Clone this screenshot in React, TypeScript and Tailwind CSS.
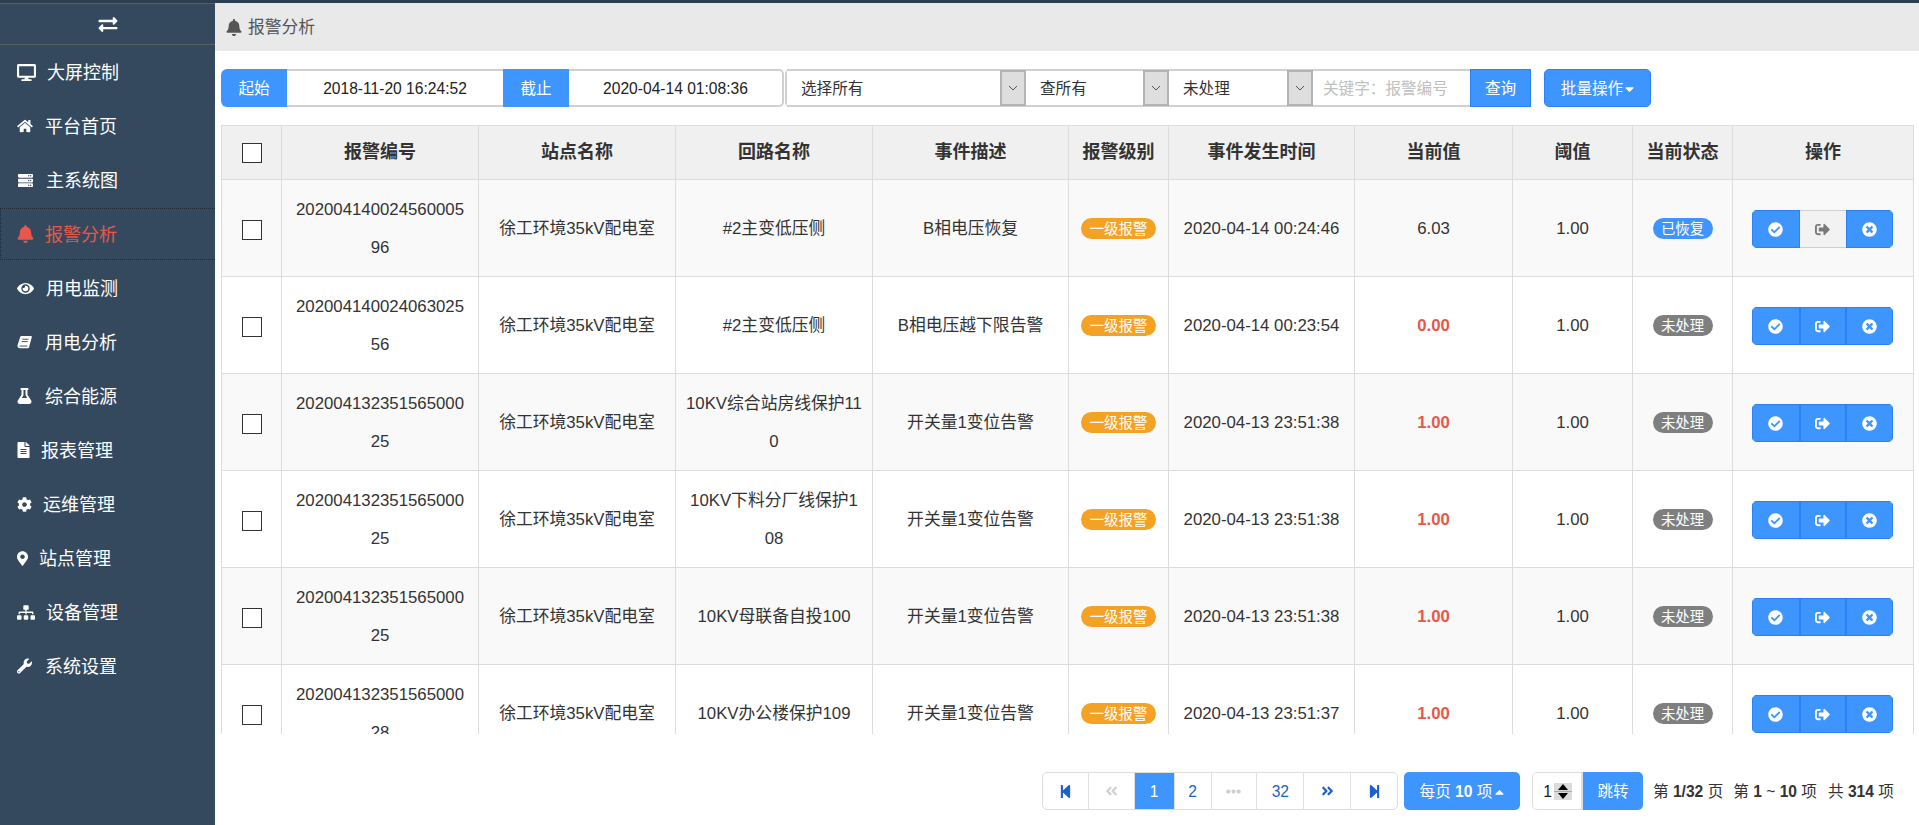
import React from "react";
import {
  FaDesktop, FaHome, FaServer, FaBell, FaEye, FaFlask, FaFileAlt, FaCog, FaMapMarkerAlt, FaSitemap, FaWrench,
  FaExchangeAlt, FaCheckCircle, FaTimesCircle, FaSignOutAlt, FaStepBackward, FaStepForward, FaAngleDoubleLeft,
  FaAngleDoubleRight, FaEllipsisH, FaCaretDown, FaCaretUp,
} from "react-icons/fa";

const FONT = "font-['Liberation_Sans','Noto_Sans_CJK_SC',sans-serif]";

function BookIcon({ className }: { className?: string }) {
  return (
    <svg viewBox="0 0 16 16" className={className}>
      <path fill="currentColor" d="M4.5 1H15a.8.8 0 0 1 .8 1L12.9 13a1.5 1.5 0 0 1-1.4 1.1H3A2.5 2.5 0 0 1 .6 11L3.4 2A1.5 1.5 0 0 1 4.5 1Z" />
      <path fill="none" stroke="#34495e" strokeWidth="1" d="M5.6 4.5H12.2M4.9 7H11.5M2.7 11.8H11" />
    </svg>
  );
}

const menu = [
  { icon: FaDesktop, label: "大屏控制", box: "w-[19px] h-[17px]", slot: "w-[30px]" },
  { icon: FaHome, label: "平台首页", box: "w-[16px] h-[14px]", slot: "w-[28px]" },
  { icon: FaServer, label: "主系统图", box: "w-[17px] h-[15px]", slot: "w-[29px]" },
  { icon: FaBell, label: "报警分析", box: "w-[17px] h-[18px]", slot: "w-[28px]", active: true },
  { icon: FaEye, label: "用电监测", box: "w-[17px] h-[15px]", slot: "w-[29px]" },
  { icon: BookIcon, label: "用电分析", box: "w-[15px] h-[15px]", slot: "w-[28px]" },
  { icon: FaFlask, label: "综合能源", box: "w-[15px] h-[16px]", slot: "w-[28px]" },
  { icon: FaFileAlt, label: "报表管理", box: "w-[13px] h-[16px]", slot: "w-[24px]" },
  { icon: FaCog, label: "运维管理", box: "w-[15px] h-[15px]", slot: "w-[26px]" },
  { icon: FaMapMarkerAlt, label: "站点管理", box: "w-[11px] h-[15px]", slot: "w-[22px]" },
  { icon: FaSitemap, label: "设备管理", box: "w-[18px] h-[15px]", slot: "w-[29px]" },
  { icon: FaWrench, label: "系统设置", box: "w-[15px] h-[16px]", slot: "w-[28px]" },
];

const heads = ["报警编号", "站点名称", "回路名称", "事件描述", "报警级别", "事件发生时间", "当前值", "阈值", "当前状态", "操作"];

const rows = [
  { id: ["202004140024560005", "96"], loop: ["#2主变低压侧"], desc: "B相电压恢复", time: "2020-04-14 00:24:46", val: "6.03", red: false, done: true },
  { id: ["202004140024063025", "56"], loop: ["#2主变低压侧"], desc: "B相电压越下限告警", time: "2020-04-14 00:23:54", val: "0.00", red: true, done: false },
  { id: ["202004132351565000", "25"], loop: ["10KV综合站房线保护11", "0"], desc: "开关量1变位告警", time: "2020-04-13 23:51:38", val: "1.00", red: true, done: false },
  { id: ["202004132351565000", "25"], loop: ["10KV下料分厂线保护1", "08"], desc: "开关量1变位告警", time: "2020-04-13 23:51:38", val: "1.00", red: true, done: false },
  { id: ["202004132351565000", "25"], loop: ["10KV母联备自投100"], desc: "开关量1变位告警", time: "2020-04-13 23:51:38", val: "1.00", red: true, done: false },
  { id: ["202004132351565000", "28"], loop: ["10KV办公楼保护109"], desc: "开关量1变位告警", time: "2020-04-13 23:51:37", val: "1.00", red: true, done: false },
];

function Select({ label, w }: { label: string; w: string }) {
  return (
    <div className={`${w} flex items-stretch bg-white border-y-2 border-[#d0d0d0]`}>
      <div className="flex-1 pl-[14px] pt-[2px] flex items-center text-[#333]">{label}</div>
      <div className="w-[26px] -my-[1px] bg-[#dedede] border-2 border-[#b4b4b4] flex items-center justify-center">
        <svg viewBox="0 0 10 6" className="w-[10px] h-[6px]">
          <path d="M1 1l4 4 4-4" fill="none" stroke="#555" strokeWidth="1" />
        </svg>
      </div>
    </div>
  );
}

function Action({ icon: Icon, w, gray }: { icon: React.ComponentType<{ className?: string }>; w: string; gray?: boolean }) {
  return (
    <div className={`${w} flex items-center justify-center ${gray ? "bg-[#f2f2f2] border-y border-[#cfcfcf]" : "bg-[#3e95fe] border border-[#2a80f5]"}`}>
      <Icon className={`w-[15px] h-[15px] ${gray ? "text-[#7a7a7a]" : "text-white"}`} />
    </div>
  );
}

function PageCell({ w, children, cls = "" }: { w: string; children: React.ReactNode; cls?: string }) {
  return <div className={`${w} flex items-center justify-center border-r border-[#e0e0e0] last:border-r-0 ${cls}`}>{children}</div>;
}

export default function App() {
  return (
    <div className={`${FONT} h-[825px] w-[1919px] flex flex-col overflow-hidden bg-white text-[#333] text-[16.8px]`}>
      <div className="h-[3px] bg-[#2c3e50] shrink-0" />
      <div className="flex flex-1 min-h-0">
        <aside className="w-[215px] shrink-0 bg-[#34495e] text-white">
          <div className="h-[42px] border-y border-[#5b5f62] flex items-center justify-center">
            <FaExchangeAlt className="w-[22px] h-[19px] text-white" />
          </div>
          {menu.map((m) => {
            const Icon = m.icon;
            return (
              <div
                key={m.label}
                className={`flex items-center text-[18px] ${m.active ? "h-[52px] my-[1px] pl-[16px] text-[#e9574a] border-y border-l border-dotted border-[#1f2c38]" : "h-[54px] pl-[17px] text-white"}`}
              >
                <div className={`${m.slot} shrink-0 flex items-center`}>
                  <Icon className={m.box} />
                </div>
                <span className="pt-[2px]">{m.label}</span>
              </div>
            );
          })}
        </aside>

        <main className="flex-1 min-w-0 flex flex-col">
          <div className="h-[48px] shrink-0 bg-[#e9e9e9] pl-[11px] flex items-center text-[#555]">
            <FaBell className="w-[16px] h-[17px] mr-[6px]" />
            <span className="pt-[2px]">报警分析</span>
          </div>

          <div className="mt-[18px] ml-[6px] h-[38px] flex items-stretch text-[15.6px] shrink-0">
            <div className="w-[66px] pt-[2px] bg-[#3e95fe] text-white rounded-l-[6px] flex items-center justify-center">起始</div>
            <div className="w-[216px] pt-[2px] bg-white border-y-2 border-[#d0d0d0] flex items-center justify-center text-[#222]">2018-11-20 16:24:52</div>
            <div className="w-[66px] pt-[2px] bg-[#3e95fe] text-white flex items-center justify-center">截止</div>
            <div className="w-[215px] pt-[1px] bg-white border-y-2 border-r-2 border-[#d0d0d0] rounded-r-[5px] flex items-center justify-center text-[#222]">2020-04-14 01:08:36</div>
            <div className="w-[241px] ml-[1px] rounded-l-[5px] border-l-2 border-[#d0d0d0] flex items-stretch">
              <Select label="选择所有" w="w-full" />
            </div>
            <Select label="查所有" w="w-[143px]" />
            <Select label="未处理" w="w-[144px]" />
            <div className="w-[157px] pt-[2px] bg-white border-y-2 border-[#d0d0d0] pl-[10px] flex items-center text-[#c0c0c0]">关键字：报警编号</div>
            <div className="w-[61px] pt-[1px] bg-[#3e95fe] border border-[#2a80f5] text-white flex items-center justify-center">查询</div>
            <div className="w-[107px] pt-[1px] ml-[13px] bg-[#3e95fe] border border-[#2a80f5] rounded-[5px] text-white flex items-center justify-center">
              批量操作
              <FaCaretDown className="w-[9px] h-[14px] ml-[2px]" />
            </div>
          </div>

          <div className="mt-[18px] ml-[6px] w-[1693px] h-[609px] overflow-hidden shrink-0">
            <table className="table-fixed w-[1692px] border-collapse text-center">
              <colgroup>
                <col className="w-[60px]" />
                <col className="w-[197px]" />
                <col className="w-[197px]" />
                <col className="w-[197px]" />
                <col className="w-[196px]" />
                <col className="w-[100px]" />
                <col className="w-[186px]" />
                <col className="w-[158px]" />
                <col className="w-[120px]" />
                <col className="w-[100px]" />
                <col className="w-[181px]" />
              </colgroup>
              <thead>
                <tr className="bg-[#f0f0f0] h-[54px]">
                  <th className="border border-[#dcdcdc] p-0">
                    <div className="w-[20px] h-[20px] mx-auto bg-white border border-[#333]" />
                  </th>
                  {heads.map((h) => (
                    <th key={h} className="border border-[#dcdcdc] p-0 text-[18px] font-bold text-[#333]">{h}</th>
                  ))}
                </tr>
              </thead>
              <tbody>
                {rows.map((r, i) => (
                  <tr key={i} className={`h-[97px] ${i % 2 === 0 ? "bg-[#f9f9f9]" : "bg-white"}`}>
                    <td className="border border-[#dcdcdc] p-0">
                      <div className="w-[20px] h-[20px] mx-auto mt-[4px] bg-white border border-[#333]" />
                    </td>
                    <td className="border border-[#dcdcdc] p-0 pt-[1px] leading-[38px]">
                      {r.id.map((t) => <div key={t}>{t}</div>)}
                    </td>
                    <td className="border border-[#dcdcdc] p-0 pt-[2px]">徐工环境35kV配电室</td>
                    <td className="border border-[#dcdcdc] p-0 pt-[1px] leading-[38px] whitespace-nowrap">
                      {r.loop.map((t) => <div key={t}>{t}</div>)}
                    </td>
                    <td className="border border-[#dcdcdc] p-0 pt-[2px]">{r.desc}</td>
                    <td className="border border-[#dcdcdc] p-0">
                      <span className="inline-flex items-center justify-center w-[75px] h-[21px] mt-[3px] pt-[1px] rounded-full bg-[#f4a223] text-white text-[14.4px]">一级报警</span>
                    </td>
                    <td className="border border-[#dcdcdc] p-0 pt-[2px]">{r.time}</td>
                    <td className={`border border-[#dcdcdc] p-0 pt-[2px] ${r.red ? "text-[#e9574a] font-bold" : ""}`}>{r.val}</td>
                    <td className="border border-[#dcdcdc] p-0 pt-[2px]">1.00</td>
                    <td className="border border-[#dcdcdc] p-0">
                      <span className={`inline-flex items-center justify-center w-[60px] h-[21px] mt-[3px] pt-[1px] rounded-full text-white text-[14.4px] ${r.done ? "bg-[#3e95fe]" : "bg-[#7f7f7f]"}`}>
                        {r.done ? "已恢复" : "未处理"}
                      </span>
                    </td>
                    <td className="border border-[#dcdcdc] p-0 pr-[2px]">
                      <div className="flex w-[141px] h-[38px] mt-[2px] mx-auto rounded-[5px] overflow-hidden">
                        <Action icon={FaCheckCircle} w="w-[48px]" />
                        <Action icon={FaSignOutAlt} w="w-[46px]" gray={r.done} />
                        <Action icon={FaTimesCircle} w="w-[47px]" />
                      </div>
                    </td>
                  </tr>
                ))}
              </tbody>
            </table>
          </div>

          <div className="mt-[38px] ml-[827px] h-[38px] flex items-stretch text-[15.6px] shrink-0">
            <div className="flex w-[356px] border border-[#dedede] rounded-[5px] overflow-hidden bg-white text-[#1c5fd0]">
              <PageCell w="w-[46px]"><FaStepBackward className="w-[13px] h-[15px]" /></PageCell>
              <PageCell w="w-[46px]" cls="text-[#cfcfcf]"><FaAngleDoubleLeft className="w-[13px] h-[14px]" /></PageCell>
              <PageCell w="w-[40px]" cls="pt-[1px] bg-[#3e95fe] text-white">1</PageCell>
              <PageCell w="w-[37px]" cls="pt-[1px]">2</PageCell>
              <PageCell w="w-[46px]" cls="text-[#cfcfcf]"><FaEllipsisH className="w-[15px] h-[15px]" /></PageCell>
              <PageCell w="w-[47px]" cls="pt-[1px]">32</PageCell>
              <PageCell w="w-[47px]"><FaAngleDoubleRight className="w-[13px] h-[14px]" /></PageCell>
              <PageCell w="w-[46px]"><FaStepForward className="w-[13px] h-[15px]" /></PageCell>
            </div>
            <div className="w-[116px] ml-[6px] pt-[1px] bg-[#3e95fe] rounded-[5px] text-white flex items-center justify-center">
              每页&nbsp;<b>10</b>&nbsp;项
              <FaCaretUp className="w-[9px] h-[14px] ml-[3px]" />
            </div>
            <div className="w-[51px] ml-[12px] border border-[#dedede] border-r-2 rounded-l-[5px] bg-white flex items-center justify-end pr-[9px]">
              <span className="text-[#222] mr-[2px] pt-[1px]">1</span>
              <div className="w-[18px] h-[17px] flex flex-col bg-[#dcdcdc]">
                <svg viewBox="0 0 18 8" className="w-[18px] h-[8px]"><polygon points="9,1 14,7 4,7" fill="#000" /></svg>
                <div className="h-[1px] bg-[#aaa]" />
                <svg viewBox="0 0 18 8" className="w-[18px] h-[8px]"><polygon points="4,1 14,1 9,7" fill="#000" /></svg>
              </div>
            </div>
            <div className="w-[60px] pt-[1px] bg-[#3e95fe] rounded-r-[5px] text-white flex items-center justify-center">跳转</div>
            <div className="ml-[10px] pt-[1px] flex items-center whitespace-pre text-[#333]">
              <span>第 <b>1/32</b> 页</span>
              <span className="ml-[10px]">第 <b>1</b> ~ <b>10</b> 项</span>
              <span className="ml-[11px]">共 <b>314</b> 项</span>
            </div>
          </div>
        </main>
      </div>
    </div>
  );
}
